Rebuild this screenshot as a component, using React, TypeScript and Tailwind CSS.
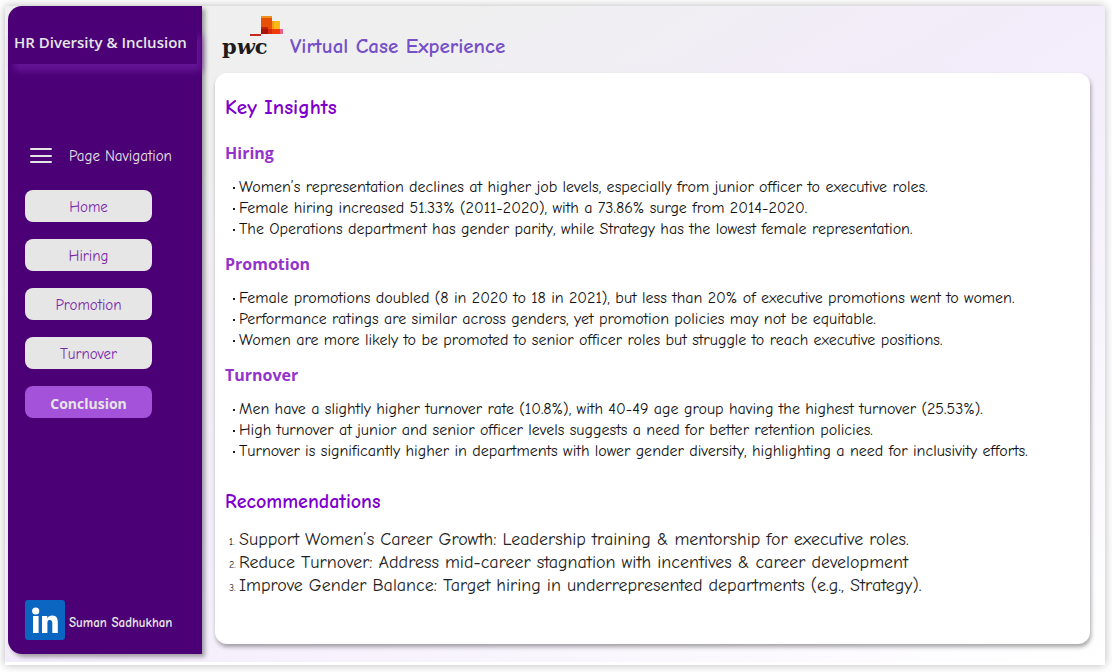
import React from "react";

const comic = "font-['Comic_Sans_MS','Comic_Neue','Open_Sans',sans-serif]";

const pages = ["Home", "Hiring", "Promotion", "Turnover", "Conclusion"];

const insights = [
  {
    title: "Hiring",
    points: [
      "Women’s representation declines at higher job levels, especially from junior officer to executive roles.",
      "Female hiring increased 51.33% (2011-2020), with a 73.86% surge from 2014-2020.",
      "The Operations department has gender parity, while Strategy has the lowest female representation.",
    ],
  },
  {
    title: "Promotion",
    points: [
      "Female promotions doubled (8 in 2020 to 18 in 2021), but less than 20% of executive promotions went to women.",
      "Performance ratings are similar across genders, yet promotion policies may not be equitable.",
      "Women are more likely to be promoted to senior officer roles but struggle to reach executive positions.",
    ],
  },
  {
    title: "Turnover",
    points: [
      "Men have a slightly higher turnover rate (10.8%), with 40-49 age group having the highest turnover (25.53%).",
      "High turnover at junior and senior officer levels suggests a need for better retention policies.",
      "Turnover is significantly higher in departments with lower gender diversity, highlighting a need for inclusivity efforts.",
    ],
  },
];

const recommendations = [
  "Support Women’s Career Growth: Leadership training & mentorship for executive roles.",
  "Reduce Turnover: Address mid-career stagnation with incentives & career development",
  "Improve Gender Balance: Target hiring in underrepresented departments (e.g., Strategy).",
];

function PwcLogo() {
  return (
    <svg viewBox="0 0 62 48" className="h-12 w-[62px] shrink-0" role="img" aria-label="pwc">
      <rect x="39" y="2" width="11" height="18" fill="#e8500a" />
      <rect x="39" y="2" width="11" height="2" fill="#f0901c" />
      <rect x="50" y="7" width="8" height="8" fill="#fdb913" />
      <rect x="50" y="7" width="2" height="8" fill="#f59c14" />
      <rect x="39" y="13" width="7" height="7" fill="#c22208" />
      <rect x="39" y="15" width="7" height="5" fill="#a81508" />
      <rect x="46" y="15" width="4" height="5" fill="#d92a0a" />
      <rect x="50" y="15" width="8" height="5" fill="#ee3d0c" />
      <rect x="58" y="15" width="3" height="5" fill="#ec5f8f" />
      <rect x="28" y="20" width="11" height="2" fill="#c8281e" />
      <text x="0" y="40" fill="#1f1b1c" fontSize="21" fontWeight="700" fontFamily="'DejaVu Serif', serif">
        p<tspan fontStyle="italic">w</tspan>c
      </text>
    </svg>
  );
}

function LinkedInLogo() {
  return (
    <svg viewBox="0 0 40 40" className="size-10 shrink-0" aria-hidden="true">
      <rect width="40" height="40" rx="3" fill="#0b66c2" />
      <circle cx="10.700" cy="11" r="3.600" fill="#fff" />
      <rect x="8" y="16" width="5.600" height="17" fill="#fff" />
      <path d="M17 16h5.200v2.300c.9-1.600 2.700-2.700 5-2.700 4.600 0 5.600 3 5.600 7.200V33h-5.500v-8.900c0-2-.2-4-2.500-4s-2.400 2-2.400 4V33H17z" fill="#fff" />
    </svg>
  );
}

function Sidebar() {
  return (
    <aside className="flex w-[194px] shrink-0 flex-col rounded-l-[14px] bg-[#4b0076] pb-3.5 shadow-[3px_3px_4px_rgba(0,0,0,0.35)]">
      <h1 className="mt-[23px] mr-[5px] ml-0.5 bg-[#4b0076] pb-2 pl-1 font-['Open_Sans',sans-serif] text-[15px] leading-[27px] font-semibold whitespace-nowrap text-[#e6e6e6] shadow-[4px_7px_7px_#641596]">
        HR Diversity &amp; Inclusion
      </h1>
      <div className="mt-20 ml-[22px] flex items-center gap-[17px] text-[#e6e6e6]">
        <svg viewBox="0 0 22 16" className="h-4 w-[22px]" stroke="#e6e6e6" strokeWidth="2" strokeLinecap="round" aria-hidden="true">
          <path d="M1 1h20M1 8h20M1 14h20" />
        </svg>
        <span className="text-[15px] leading-6">Page Navigation</span>
      </div>
      <nav aria-label="Page Navigation" className="mt-[22px] ml-[17px] flex w-[127px] flex-col gap-[17px]">
        {pages.map((page) =>
          page === "Conclusion" ? (
            <button key={page} type="button" aria-current="page" className="h-8 rounded-lg bg-[#a352d9] pt-0.5 font-['Open_Sans',sans-serif] text-[14px] font-bold text-[#e6e6e6]">
              {page}
            </button>
          ) : (
            <button key={page} type="button" className="h-8 rounded-lg bg-[#e6e6e6] pt-0.5 text-[15px] text-[#7a28ab]">
              {page}
            </button>
          ),
        )}
      </nav>
      <a href="#profile" className="mt-auto ml-[17px] flex items-end gap-1 text-[13px] leading-[34px] font-bold text-[#e6e6e6]">
        <LinkedInLogo />
        <span>Suman Sadhukhan</span>
      </a>
    </aside>
  );
}

export default function App() {
  return (
    <div className={`flex min-h-screen bg-white pt-1.5 pr-[7px] pb-[7px] pl-[5px] ${comic}`}>
      <div className="flex flex-1 border-b-[3px] border-white bg-linear-to-br from-[#efefef] from-20% via-[#f3ecfb] to-white pb-2 pl-[3px] shadow-[0_0_9px_rgba(0,0,0,0.28)]">
        <Sidebar />
        <main className="flex min-w-0 flex-1 flex-col pr-[15px] pb-2.5 pl-[13px]">
          <header className="flex h-[67px] shrink-0 items-start gap-1.5 pt-2 pl-[7px]">
            <PwcLogo />
            <h2 className="mt-[18px] text-[21px] leading-7 font-bold text-[#7550c8]">Virtual Case Experience</h2>
          </header>
          <article className="flex-1 rounded-xl bg-white px-2.5 pt-5 shadow-[1px_3px_4px_rgba(0,0,0,0.35)]">
            <h2 className="text-[21px] leading-7 font-bold text-[#7d00cc]">Key Insights</h2>
            <div className="mt-5 flex flex-col gap-3">
              {insights.map((group) => (
                <section key={group.title}>
                  <h3 className="font-['Open_Sans',sans-serif] text-[16px] leading-6 font-bold text-[#9333cc]">{group.title}</h3>
                  <ul className="mt-3 text-[16px] leading-[21px] text-[#111111]">
                    {group.points.map((point) => (
                      <li key={point} className="flex items-center">
                        <span aria-hidden="true" className="mr-1 ml-2 size-0.5 shrink-0 bg-[#1f1f1f]" />
                        {point}
                      </li>
                    ))}
                  </ul>
                </section>
              ))}
            </div>
            <h2 className="mt-[26px] text-[20px] leading-7 font-bold text-[#7d00cc]">Recommendations</h2>
            <ol className="mt-3 text-[18px] leading-[23px] text-[#222222]">
              {recommendations.map((text, index) => (
                <li key={text} className="flex items-baseline">
                  <span className="w-3.5 shrink-0 pl-1 text-[10px] leading-none">{index + 1}.</span>
                  {text}
                </li>
              ))}
            </ol>
          </article>
        </main>
      </div>
    </div>
  );
}
